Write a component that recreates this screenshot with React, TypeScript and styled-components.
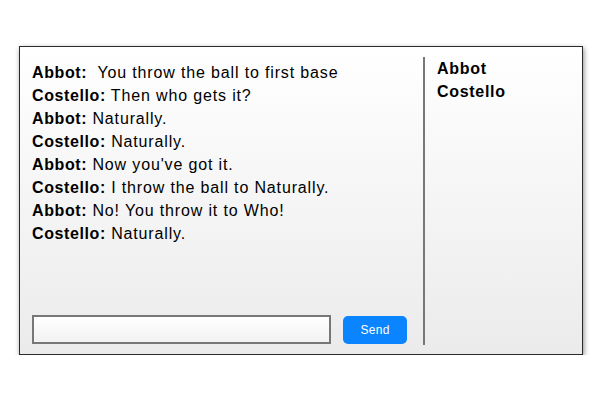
import styled, { createGlobalStyle } from 'styled-components';

const GlobalStyle = createGlobalStyle`
  body {
    margin: 0;
    background: #ffffff;
    font-family: "Liberation Sans", Arial, sans-serif;
  }
`;

const Panel = styled.div`
  box-sizing: border-box;
  margin: 46px 0 0 19px;
  width: 564px;
  height: 309px;
  border: 1px solid #2a2a2a;
  background: linear-gradient(to bottom, #ffffff 0%, #ebebeb 100%);
  box-shadow: 1px 2px 5px rgba(0, 0, 0, 0.45);
  display: flex;
`;

const ChatColumn = styled.div`
  box-sizing: border-box;
  width: 403px;
  padding: 14px 0 10px 12px;
  display: flex;
  flex-direction: column;
`;

const Messages = styled.div`
  flex: 1;
  font-size: 16px;
  line-height: 23px;
  letter-spacing: 0.85px;
  color: #000;
`;

const Line = styled.div`
  white-space: pre;
`;

const Speaker = styled.b`
  font-weight: bold;
  letter-spacing: 0.6px;
`;

const Composer = styled.form`
  display: flex;
  align-items: center;
  gap: 12px;
  margin: 0;
`;

const Input = styled.input`
  box-sizing: border-box;
  width: 299px;
  height: 29px;
  border: 2px solid #777;
  background: linear-gradient(to bottom, #ffffff, #f2f2f2);
  padding: 0 6px;
  font: 14px "Liberation Sans", Arial, sans-serif;
  outline: none;
`;

const SendButton = styled.button`
  width: 64px;
  height: 28px;
  border: none;
  border-radius: 5px;
  background: #0a84ff;
  color: #fff;
  font: 12px "Liberation Sans", Arial, sans-serif;
  letter-spacing: 0.3px;
  cursor: pointer;
`;

const Divider = styled.div`
  width: 2px;
  margin: 10px 0 9px;
  background: #777;
`;

const Roster = styled.div`
  padding: 10px 0 0 12px;
  font-size: 16px;
  font-weight: bold;
  line-height: 23px;
  letter-spacing: 0.7px;
  color: #000;
`;

const lines: [string, string][] = [
  ['Abbot:', '  You throw the ball to first base'],
  ['Costello:', ' Then who gets it?'],
  ['Abbot:', ' Naturally.'],
  ['Costello:', ' Naturally.'],
  ['Abbot:', " Now you've got it."],
  ['Costello:', ' I throw the ball to Naturally.'],
  ['Abbot:', ' No! You throw it to Who!'],
  ['Costello:', ' Naturally.'],
];

export default function App() {
  return (
    <>
      <GlobalStyle />
      <Panel>
        <ChatColumn>
          <Messages>
            {lines.map(([who, text], i) => (
              <Line key={i}>
                <Speaker>{who}</Speaker>
                {text}
              </Line>
            ))}
          </Messages>
          <Composer onSubmit={(e) => e.preventDefault()}>
            <Input type="text" />
            <SendButton type="submit">Send</SendButton>
          </Composer>
        </ChatColumn>
        <Divider />
        <Roster>
          <div>Abbot</div>
          <div>Costello</div>
        </Roster>
      </Panel>
    </>
  );
}
